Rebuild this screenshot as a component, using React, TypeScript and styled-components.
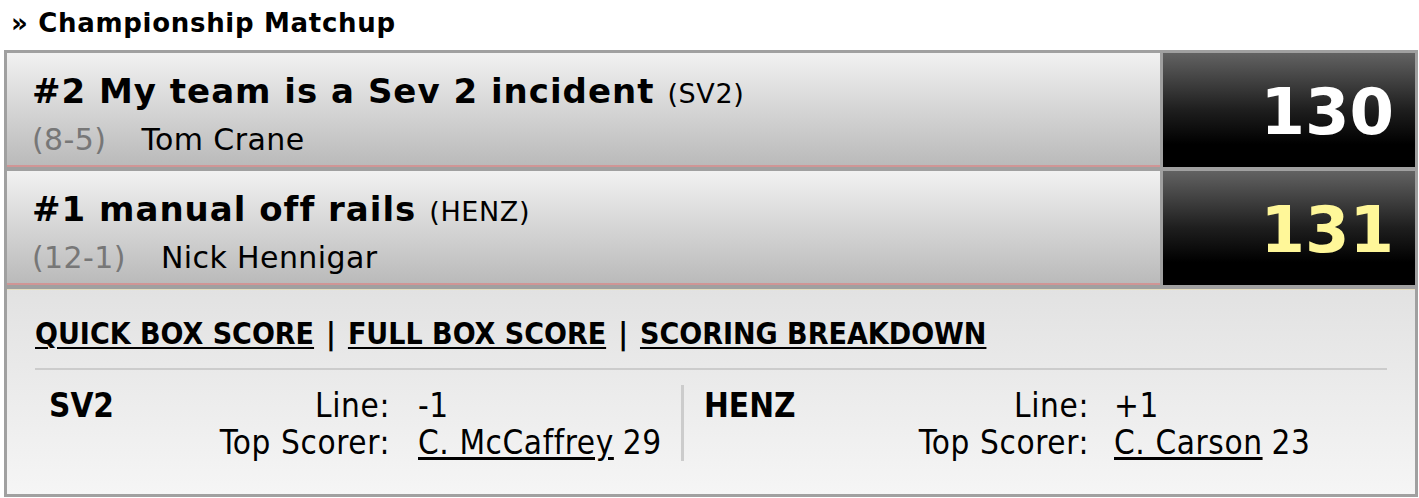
import React from "react";
import styled, { createGlobalStyle } from "styled-components";

const GlobalStyle = createGlobalStyle`
  html, body { margin: 0; padding: 0; background: #ffffff; }
  body { font-family: "DejaVu Sans", Verdana, sans-serif; color: #000; }
`;

const Page = styled.div`
  width: 1419px;
  padding: 6px 0 0 4px;
  box-sizing: border-box;
`;

const Heading = styled.h2`
  margin: 0 0 10px 7px;
  font-size: 26px;
  letter-spacing: 0.7px;
  font-weight: bold;
  line-height: 34px;
`;

const Board = styled.div`
  width: 1414px;
  box-sizing: border-box;
  border: 3px solid #a0a0a0;
  background: #a0a0a0;
  display: flex;
  flex-direction: column;
  gap: 4px;
`;

const TeamRow = styled.div`
  display: grid;
  grid-template-columns: 1fr 252px;
  column-gap: 3px;
  height: 114px;
`;

const TeamInfo = styled.div`
  background: linear-gradient(#f1f1f1, #bababa);
  border-bottom: 2px solid #d09595;
  padding: 18px 0 0 25px;
  box-sizing: border-box;
`;

const TeamName = styled.div`
  font-size: 34px;
  letter-spacing: 1px;
  font-weight: bold;
  line-height: 40px;
  white-space: nowrap;
`;

const Abbrev = styled.span`
  font-size: 27px;
  letter-spacing: 0.6px;
  font-weight: normal;
  margin-left: 13px;
`;

const OwnerLine = styled.div`
  margin-top: 9px;
  font-size: 30px;
  letter-spacing: 0.4px;
  line-height: 34px;
  display: flex;
  gap: 35px;
`;

const Record = styled.span`
  color: #777777;
`;

const ScoreCell = styled.div<{ $winner?: boolean }>`
  background: linear-gradient(#626262 0%, #1e1e1e 50%, #000000 80%);
  color: ${(p) => (p.$winner ? "#fff799" : "#ffffff")};
  font-size: 64px;
  font-weight: bold;
  display: flex;
  align-items: center;
  justify-content: flex-end;
  padding-right: 21px;
  padding-top: 4px;
  box-sizing: border-box;
`;

const Details = styled.div`
  background: linear-gradient(#e2e2e2, #f5f5f5);
  border-top: 1px solid #e6dfc0;
  padding: 26px 28px 0 28px;
  height: 205px;
  box-sizing: border-box;
  font-family: "DejaVu Sans Condensed", "DejaVu Sans", sans-serif;
`;

const LinkBar = styled.div`
  font-size: 30px;
  font-weight: bold;
  line-height: 36px;
  padding-bottom: 16px;
  border-bottom: 2px solid #cccccc;
  display: flex;
  gap: 12px;
`;

const NavLink = styled.a`
  color: #000;
  text-decoration: underline;
  text-decoration-thickness: 2px;
  text-underline-offset: 3px;
`;

const Stats = styled.div`
  display: flex;
  margin-top: 17px;
`;

const StatBlock = styled.div<{
  $width: number;
  $team: number;
  $label: number;
  $gap: number;
  $divider?: boolean;
}>`
  width: ${(p) => p.$width}px;
  display: grid;
  grid-template-columns: ${(p) => p.$team}px ${(p) => p.$label}px 1fr;
  grid-auto-rows: 37px;
  align-items: center;
  font-size: 33px;
  letter-spacing: 0.6px;
  border-left: ${(p) => (p.$divider ? "3px solid #cccccc" : "none")};
  box-sizing: border-box;
  margin-top: ${(p) => (p.$divider ? "-2px" : "0")};
  padding-top: ${(p) => (p.$divider ? "2px" : "0")};

  & > .label {
    padding-right: ${(p) => p.$gap}px;
  }
`;

const TeamCode = styled.div<{ $pad: number }>`
  font-weight: bold;
  letter-spacing: 0;
  padding-left: ${(p) => p.$pad}px;
`;

const Label = styled.div.attrs({ className: "label" })`
  text-align: right;
`;

const Value = styled.div`
  white-space: nowrap;
`;

const Player = styled.a`
  color: #000;
  text-decoration: underline;
  text-underline-offset: 3px;
  margin-right: 9px;
`;

type Team = {
  seed: number;
  name: string;
  abbr: string;
  record: string;
  owner: string;
  score: number;
  winner?: boolean;
};

const teams: Team[] = [
  { seed: 2, name: "My team is a Sev 2 incident", abbr: "SV2", record: "(8-5)", owner: "Tom Crane", score: 130 },
  { seed: 1, name: "manual off rails", abbr: "HENZ", record: "(12-1)", owner: "Nick Hennigar", score: 131, winner: true },
];

export default function App() {
  return (
    <>
      <GlobalStyle />
      <Page>
        <Heading>» Championship Matchup</Heading>
        <Board>
          {teams.map((t) => (
            <TeamRow key={t.abbr}>
              <TeamInfo>
                <TeamName>
                  #{t.seed} {t.name}
                  <Abbrev>({t.abbr})</Abbrev>
                </TeamName>
                <OwnerLine>
                  <Record>{t.record}</Record>
                  <span>{t.owner}</span>
                </OwnerLine>
              </TeamInfo>
              <ScoreCell $winner={t.winner}>{t.score}</ScoreCell>
            </TeamRow>
          ))}
          <Details>
            <LinkBar>
              <NavLink href="#">QUICK BOX SCORE</NavLink>|
              <NavLink href="#">FULL BOX SCORE</NavLink>|
              <NavLink href="#">SCORING BREAKDOWN</NavLink>
            </LinkBar>
            <Stats>
              <StatBlock $width={646} $team={120} $label={263} $gap={28}>
                <TeamCode $pad={14}>SV2</TeamCode>
                <Label>Line:</Label>
                <Value>-1</Value>
                <div />
                <Label>Top Scorer:</Label>
                <Value>
                  <Player href="#">C. McCaffrey</Player>29
                </Value>
              </StatBlock>
              <StatBlock $width={706} $team={150} $label={280} $gap={25} $divider>
                <TeamCode $pad={20}>HENZ</TeamCode>
                <Label>Line:</Label>
                <Value>+1</Value>
                <div />
                <Label>Top Scorer:</Label>
                <Value>
                  <Player href="#">C. Carson</Player>23
                </Value>
              </StatBlock>
            </Stats>
          </Details>
        </Board>
      </Page>
    </>
  );
}
